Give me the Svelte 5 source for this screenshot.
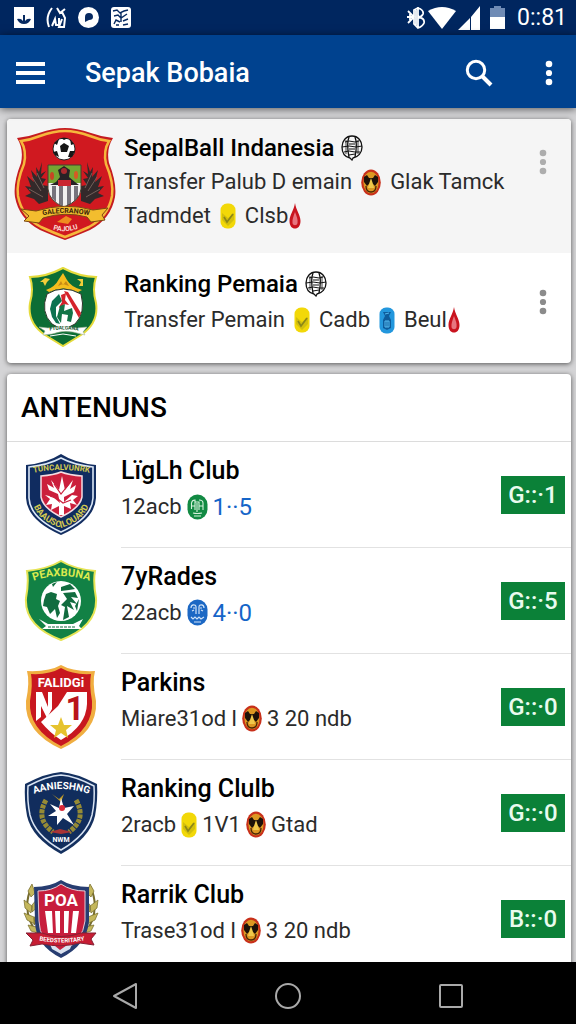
<script lang="ts">
    type Part = { text?: string; icon?: string; score?: boolean };

    const news = [
        {
            title: "SepalBall Indanesia",
            crest: "garuda",
            featured: true,
            lines: [
                [{ text: "Transfer Palub D emain" }, { icon: "face" }, { text: "Glak Tamck" }],
                [{ text: "Tadmdet" }, { icon: "yellow" }, { text: "Clsb" }, { icon: "drop" }]
            ] as Part[][]
        },
        {
            title: "Ranking Pemaia",
            crest: "green",
            featured: false,
            lines: [
                [
                    { text: "Transfer Pemain" },
                    { icon: "yellow" },
                    { text: "Cadb" },
                    { icon: "blue" },
                    { text: "Beul" },
                    { icon: "drop" }
                ]
            ] as Part[][]
        }
    ];

    const clubs = [
        {
            name: "LïgLh Club",
            crest: "navy",
            badge: "G::·1",
            line: [{ text: "12acb" }, { icon: "leaf" }, { text: "1··5", score: true }] as Part[]
        },
        {
            name: "7yRades",
            crest: "pea",
            badge: "G::·5",
            line: [{ text: "22acb" }, { icon: "mask" }, { text: "4··0", score: true }] as Part[]
        },
        {
            name: "Parkins",
            crest: "red",
            badge: "G::·0",
            line: [{ text: "Miare31od l" }, { icon: "face" }, { text: "3 20 ndb" }] as Part[]
        },
        {
            name: "Ranking Clulb",
            crest: "star",
            badge: "G::·0",
            line: [{ text: "2racb" }, { icon: "yellow" }, { text: "1V1" }, { icon: "face" }, { text: "Gtad" }] as Part[]
        },
        {
            name: "Rarrik Club",
            crest: "poa",
            badge: "B::·0",
            line: [{ text: "Trase31od l" }, { icon: "face" }, { text: "3 20 ndb" }] as Part[]
        }
    ];
</script>

{#snippet dots()}
    <svg width="10" height="26" viewBox="0 0 10 26" fill="currentColor" aria-hidden="true">
        <circle cx="5" cy="4" r="3.3" />
        <circle cx="5" cy="13" r="3.1" />
        <circle cx="5" cy="22" r="3.3" />
    </svg>
{/snippet}

{#snippet globe()}
    <svg width="22" height="26" viewBox="0 0 22 26" fill="none" stroke="#111" stroke-width="1.3" aria-hidden="true">
        <path d="M11 1C17 1 21 6 21 12C21 18 17 22 12 23L11 25L9 23C4 22 1 18 1 12C1 6 5 1 11 1Z" />
        <path d="M8 2C6 7 7 17 8 22M14 2C16 7 15 17 14 22" />
        <path d="M4 7L8 6L14 7L18 6M1 12L8 11L15 12L21 11M3 17L8 16L14 17L19 17M8 9H14M8 14H14M8 20L14 19" stroke-width="1" />
        <path d="M5 5V19M17 5V19" stroke-width="0.8" />
    </svg>
{/snippet}

{#snippet icon(kind: string)}
    {#if kind === "face"}
        <svg width="20" height="27" viewBox="0 0 20 27" aria-hidden="true">
            <ellipse cx="10" cy="13.5" rx="9.8" ry="13" fill="#c8301a" />
            <ellipse cx="10" cy="13.5" rx="7.6" ry="10.8" fill="#dc9822" />
            <path d="M3 8L6 6L8 9H12L14 6L17 8L17 13L14 17L12 15H8L6 17L3 13Z" fill="#1d1208" />
            <path d="M10 9L12 15L13 19H7L8 15Z" fill="#f0c94a" />
            <path d="M5 17Q5 23 10 23Q15 23 15 17" fill="none" stroke="#4a2308" stroke-width="1.3" />
        </svg>
    {:else if kind === "yellow"}
        <svg width="16" height="26" viewBox="0 0 16 26" aria-hidden="true">
            <rect x="0.5" y="0.5" width="15" height="25" rx="6.5" fill="#f2d808" />
            <path d="M2 10L8 15L14 10V17L8 23L2 17Z" fill="#d3bf0c" />
            <path d="M4 14L7 19L13 11" fill="none" stroke="#8c8718" stroke-width="1.7" />
        </svg>
    {:else if kind === "blue"}
        <svg width="16" height="27" viewBox="0 0 16 27" aria-hidden="true">
            <rect x="0.5" y="0.5" width="15" height="26" rx="6.5" fill="#2397dd" />
            <path d="M4 5H12L10 9L12 13V21L8 23L4 21V13L6 9Z" fill="#0e5c9c" />
            <path d="M6 7L10 6M6 14H10V20H6ZM8 14V20" fill="none" stroke="#55b9ee" />
        </svg>
    {:else if kind === "drop"}
        <svg class="drop" width="12" height="26" viewBox="0 0 12 26" aria-hidden="true">
            <path d="M6 0C7 7 11.5 12 11.5 18C11.5 23 9 25.5 6 25.5C3 25.5 0.5 23 0.5 18C0.5 12 5 7 6 0Z" fill="#c9141f" />
            <path d="M6 9C8 14 9 17 8.5 20C8 23 4 23 3.5 20C3 17 4.5 13 6 9Z" fill="#e77680" />
        </svg>
    {:else if kind === "leaf"}
        <svg width="21" height="26" viewBox="0 0 21 26" aria-hidden="true">
            <rect x="0.5" y="0.5" width="20" height="25" rx="10" fill="#128a43" />
            <path d="M4.500 15V9Q5 6 8 6V16M8 8H12V16M12 6Q16 6 16 9V16M10 9V18M5 12H8M12 12H16M6 19Q10 20 15 19M7 22H14" fill="none" stroke="#d6f2dc" stroke-width="1.1" />
        </svg>
    {:else}
        <svg width="21" height="27" viewBox="0 0 21 27" aria-hidden="true">
            <rect x="0.5" y="0.5" width="20" height="26" rx="10" fill="#1c68c4" />
            <path d="M4 9C4 5 9 5 9 8V15M17 9C17 5 12 5 12 8V15M6 9H8M13 9H15M5 12L7 11M14 11L16 12M4 18L6 20L8 18L10 20L12 18L14 20L17 18M7 23H14" fill="none" stroke="#cfe2f7" stroke-width="1.2" />
        </svg>
    {/if}
{/snippet}

{#snippet line(parts: Part[])}
    <p class="line">
        {#each parts as part}
            {#if part.icon}
                {@render icon(part.icon)}
            {:else}
                <span class:score={part.score}>{part.text}</span>
            {/if}
        {/each}
    </p>
{/snippet}

{#snippet crest(kind: string)}
    {#if kind === "garuda"}
        <svg class="crest" width="102" height="114" viewBox="0 0 102 114" aria-hidden="true">
            <path d="M3 11Q14 10 25 6Q40 1 51 1Q62 1 77 6Q88 10 99 11Q92 22 95 36Q103 56 101 70Q97 92 76 103Q62 109 51 113Q40 109 26 103Q5 92 1 70Q-1 56 7 36Q10 22 3 11Z" fill="#c51b20" />
            <path d="M7 14Q16 13 26 9Q40 4 51 4Q62 4 76 9Q86 13 95 14Q89 24 92 37Q100 56 98 69Q94 90 75 100Q62 106 51 110Q40 106 27 100Q8 90 4 69Q2 56 10 37Q13 24 7 14Z" fill="#d01920" stroke="#f6b73c" stroke-width="2.5" />
            <circle cx="50" cy="22" r="11" fill="#fff" stroke="#222" />
            <path d="M46 19L50 16L55 19L53 25H47ZM40 16L45 12L43 18ZM56 12L60 17L57 18ZM39 25L43 24L45 30L41 28ZM56 24L61 24L58 30L54 30ZM47 11L50 13L54 11Z" fill="#161616" />
            <path d="M28 35L25 45L22 40L23 50L17 43L20 55L13 49L17 60L11 59L17 66L11 69L20 72L25 77L34 74V59L28 58L32 52L27 51L32 44L27 47Z" fill="#33292a" />
            <path d="M73 35L76 45L79 40L78 50L84 43L81 55L88 49L84 60L90 59L84 66L90 69L81 72L76 77L67 74V59L73 58L69 52L74 51L69 44L74 47Z" fill="#33292a" />
            <path d="M18 50L27 64M23 46L30 61M15 62L29 70M83 50L74 64M78 46L71 61M86 62L72 70" fill="none" stroke="#74605a" />
            <path d="M34 38H67V62Q66 74 50 80Q35 74 34 62Z" fill="#f1f1f1" />
            <path d="M34 38H67V56H34Z" fill="#74a632" />
            <path d="M38 59H42V75L38 71ZM45 59H49V79L45 77ZM53 59H57V77L53 79ZM60 59H64V70L60 75Z" fill="#77747d" />
            <path d="M36 58L42 55L46 50L44 43L50 39L56 43L55 50L61 55L65 58Z" fill="#272126" />
            <circle cx="50" cy="44" r="3" fill="#a92a2e" />
            <path d="M44 53H57V59H44Z" fill="#c92631" />
            <ellipse cx="38" cy="49" rx="2" ry="4" fill="#c84524" />
            <ellipse cx="62" cy="48" rx="2" ry="4" fill="#d75a24" />
            <path d="M34 38H67V62Q66 74 50 80Q35 74 34 62Z" fill="none" stroke="#44402e" />
            <path d="M7 82L22 84Q51 75 79 83L94 81L88 88L91 93L77 95L73 90Q51 84 29 91L25 96L10 94L15 89Z" fill="#f3bd2e" stroke="#7d4813" />
            <path id="garuda-band" d="M22 90Q51 82 82 90" fill="none" />
            <text class="lettering" font-size="7" fill="#3b240c"><textPath href="#garuda-band" startOffset="50%" text-anchor="middle">GALECRANOW</textPath></text>
            <path d="M43 95L52 89L58 92L54 97Z" fill="#ef8c20" />
            <path id="garuda-foot" d="M31 99Q51 110 72 98" fill="none" />
            <text class="lettering" font-size="7" fill="#f9ddd5"><textPath href="#garuda-foot" startOffset="50%" text-anchor="middle">PAJOLU</textPath></text>
        </svg>
    {:else if kind === "green"}
        <svg class="crest" width="70" height="80" viewBox="0 0 70 80" aria-hidden="true">
            <path d="M2 10Q18 10 35 1Q52 10 68 10Q64 22 68 36Q71 56 53 68L35 79L17 68Q-1 56 2 36Q6 22 2 10Z" fill="#0c6d35" stroke="#e5db3c" stroke-width="2" />
            <path d="M18 23Q27 20 31 12L35 6L39 13Q43 20 54 23L50 25Q35 18 21 25Z" fill="#f4bd1e" />
            <path d="M30 19L33 14L35 18L38 14L41 19L35 17Z" fill="#c88a14" />
            <path d="M12 15L17 11L22 12L19 15L17 19L15 15ZM49 12H55V19H51L53 15Z" fill="#f2ce38" />
            <path d="M19 27Q35 17 53 27Q58 46 47 57L35 63L24 57Q12 45 19 27Z" fill="#fff" stroke="#2d3529" />
            <path d="M36 24L40 25L53 46L51 51Z" fill="#d4232b" />
            <path d="M31 27L24 34L22 42L24 50L28 56L32 57L28 49L28 40L34 34Z" fill="#0c7250" />
            <path d="M33 28L38 26L37 33L41 38L36 37L33 43L31 40L34 35Z" fill="#d4232b" />
            <path d="M32 39L37 37L36 44L44 41L45 46L43 55L39 54L40 48L34 47L33 56L29 50Z" fill="#127447" />
            <path d="M11 60L20 61Q36 58 49 61L59 60L55 65L57 68L45 65Q34 63 24 67L15 68L17 64Z" fill="#fff" stroke="#a6b99b" stroke-width="0.6" />
            <path id="green-band" d="M16 65Q35 60 56 65" fill="none" />
            <text class="lettering" font-size="5" fill="#15572f"><textPath href="#green-band" startOffset="50%" text-anchor="middle">FTUALGANA</textPath></text>
            <path d="M22 69L35 67L48 69" fill="none" stroke="#fff" />
        </svg>
    {:else if kind === "navy"}
        <svg class="crest" width="72" height="84" viewBox="0 0 72 84" aria-hidden="true">
            <path d="M1 12Q22 10 36 1Q50 10 71 12V45Q70 67 36 82Q2 67 1 45Z" fill="#132e61" />
            <path d="M4 14Q23 12 36 5Q49 12 68 14V45Q67 65 36 79Q5 65 4 45Z" fill="#102c60" stroke="#dce9f8" stroke-width="1.6" />
            <path d="M16 23Q29 22 36 19Q44 22 57 23V44Q55 55 36 64Q18 55 16 44Z" fill="#cb1f3c" stroke="#f5dce2" stroke-width="1.5" />
            <path d="M34 62V53L26 57L27 51L21 52L25 46L20 42L28 44L35 50L33 41L24 37L22 31L29 35L26 27L34 37L37 23L40 37L48 27L45 36L51 32L49 39L39 44V49L47 42L53 43L48 47L52 52L45 50L46 56L39 53V62Z" fill="#fff" />
            <path d="M29 31L36 41L44 31M25 43L33 46L38 50L46 47" fill="none" stroke="#cb1f3c" stroke-width="1.2" />
            <path id="navy-top" d="M7 20Q36 14 66 20" fill="none" />
            <text class="lettering" font-size="8" fill="#d4c951"><textPath href="#navy-top" startOffset="50%" text-anchor="middle">TUNCALVUNRK</textPath></text>
            <path id="navy-bottom" d="M6 38Q6 66 36 75Q66 66 67 38" fill="none" />
            <text class="lettering" font-size="9" fill="#d4c951"><textPath href="#navy-bottom" startOffset="50%" text-anchor="middle">BAAUSCILOUARD</textPath></text>
        </svg>
    {:else if kind === "pea"}
        <svg class="crest" width="72" height="82" viewBox="0 0 72 82" aria-hidden="true">
            <path d="M2 11Q23 9 36 1Q49 9 70 11Q68 22 71 38Q73 66 36 80Q-1 66 1 38Q4 22 2 11Z" fill="#128145" stroke="#e6e454" stroke-width="2" />
            <circle cx="36" cy="41" r="20" fill="#fff" />
            <path d="M19 40L21 34L26 32L32 34L31 39L35 41L33 46L35 53L32 58L30 49L25 54L22 47L18 46ZM36 27L45 24L50 29L44 30L36 31ZM38 33L50 32L53 38L46 37L52 44L45 42L49 50L42 46L44 57L38 60L40 47L36 45L42 39Z" fill="#116c3f" />
            <path d="M27 24L32 22L28 27ZM23 30L28 27M50 46L54 39L52 51" fill="#116c3f" />
            <path d="M14 59L23 64H48L58 59L54 66L57 69H17L21 66Z" fill="#fff" />
            <path d="M23 67H51" stroke="#116c3f" stroke-dasharray="3 1" />
            <path id="pea-top" d="M8 21Q36 11 65 21" fill="none" />
            <text class="lettering" font-size="11" fill="#dcea4e"><textPath href="#pea-top" startOffset="50%" text-anchor="middle">PEAXBUNA</textPath></text>
        </svg>
    {:else if kind === "red"}
        <svg class="crest" width="72" height="86" viewBox="0 0 72 86" aria-hidden="true">
            <path d="M2 7Q24 8 36 1Q48 8 70 7Q67 18 71 37Q73 68 36 85Q-1 68 1 37Q5 18 2 7Z" fill="#f0ae40" />
            <path d="M6 10Q24 11 36 4Q48 11 66 10Q64 20 67 37Q69 65 36 82Q3 65 5 37Q8 20 6 10Z" fill="#c8171f" />
            <path d="M11 28H17L23 43V28H27V45L22 54L16 42V53L11 57Z" fill="#fff" />
            <path d="M42 28H62V40Q61 62 36 76Q25 69 16 58L33 42Z" fill="#fff" />
            <text class="lettering" x="36" y="23" text-anchor="middle" font-size="13" fill="#fff">FALIDGi</text>
            <text class="lettering" x="50" y="56" text-anchor="middle" font-size="33" fill="#b9141c">1</text>
            <path d="M36 53L39 61L47 61L41 66L43 74L36 69L29 74L31 66L25 61L33 61Z" fill="#e6c32e" />
        </svg>
    {:else if kind === "star"}
        <svg class="crest" width="74" height="84" viewBox="0 0 74 84" aria-hidden="true">
            <path d="M1 13Q22 2 37 1Q52 2 73 13Q74 29 71 45Q66 67 37 83Q8 67 3 45Q0 29 1 13Z" fill="#14305f" />
            <path d="M4 15Q23 5 37 4Q51 5 70 15Q71 30 68 44Q63 64 37 79Q11 64 6 44Q3 30 4 15Z" fill="#112d5d" stroke="#d9e4f3" stroke-width="1.5" />
            <path id="star-top" d="M7 24Q37 12 68 24" fill="none" />
            <text class="lettering" font-size="10" fill="#fff"><textPath href="#star-top" startOffset="50%" text-anchor="middle">AANIESHNG</textPath></text>
            <path d="M22 29Q11 48 29 61M52 29Q63 48 45 61" fill="none" stroke="#968b35" stroke-width="5" stroke-dasharray="4 1" />
            <path d="M28 23L35 28L40 23L37 31Z" fill="#c09926" />
            <path d="M37 27L40 37L50 35L43 43L50 54L39 47L33 54L33 45L24 45L32 40L26 33L35 37Z" fill="#fff" />
            <circle cx="38" cy="37" r="3" fill="#d92a38" />
            <path d="M26 61L36 58L48 61L37 63Z" fill="#a93435" />
            <text class="lettering" x="37" y="71" text-anchor="middle" font-size="7" fill="#fff">NWM</text>
        </svg>
    {:else}
        <svg class="crest" width="78" height="80" viewBox="0 0 78 80" aria-hidden="true">
            <path d="M10 7Q-2 32 16 56M68 7Q80 32 62 56" fill="none" stroke="#766c2e" stroke-width="2" />
            <path d="M10 5L13 14L9 18L6 12ZM2 21L10 27L9 34L3 29ZM16 19L17 27L10 33L10 26ZM2 34L12 38L13 45L5 41ZM17 32L19 40L12 46L12 39ZM6 46L15 48L19 55L9 52ZM68 5L65 14L69 18L72 12ZM76 21L68 27L69 34L75 29ZM62 19L61 27L68 33L68 26ZM76 34L66 38L65 45L73 41ZM61 32L59 40L66 46L66 39ZM72 46L63 48L59 55L69 52Z" fill="#c4b75c" stroke="#736829" stroke-width="0.7" />
            <path d="M12 8Q28 8 39 1Q50 8 67 8V42Q65 66 39 79Q13 66 13 42Z" fill="#273d71" />
            <path d="M16 12Q30 12 39 5Q49 12 63 12V42Q61 62 39 74Q17 62 17 42Z" fill="#c71d3c" stroke="#e4ccd6" />
            <text class="lettering" x="39" y="27" text-anchor="middle" font-size="17" fill="#fff">POA</text>
            <path d="M23 32H30L31 54H26ZM33 32H38V54H34ZM42 32H47L46 54H42ZM51 32H57L54 54H49Z" fill="#fff" />
            <path d="M27 62L38 71L51 62L48 70L39 75L30 70Z" fill="#dae2ef" />
            <path d="M4 54L20 54Q39 61 59 54L74 54L69 60L72 66L58 64Q39 69 20 65L8 67L11 61Z" fill="#c71d33" stroke="#842034" />
            <path id="poa-band" d="M11 60Q39 67 69 60" fill="none" />
            <text class="lettering" font-size="6" fill="#fff"><textPath href="#poa-band" startOffset="50%" text-anchor="middle">BEEDSTERITARY</textPath></text>
        </svg>
    {/if}
{/snippet}

<div class="app">
    <div class="status">
        <div class="notifications">
            <svg width="20" height="21" viewBox="0 0 20 21" aria-hidden="true">
                <path d="M0 0H20V21H0Z" fill="#fff" />
                <path d="M3 12Q7 11 9 14V8H11V14Q13 11 17 12Q15 17 10 17Q5 17 3 12Z" fill="#072a61" />
            </svg>
            <svg width="20" height="21" viewBox="0 0 20 21" fill="none" stroke="#fff" stroke-width="2" aria-hidden="true">
                <path d="M6 1Q-1 10 3 20M6 19L9 12L10 18H13V11M11 1L14 6L19 2M16 5L19 11L18 20H13L16 12" />
            </svg>
            <svg width="21" height="21" viewBox="0 0 21 21" aria-hidden="true">
                <circle cx="10.5" cy="10.5" r="10.5" fill="#fff" />
                <path d="M7 15V10Q7 6 11 6Q15 6 15 10Q15 13 11 13Z" fill="#072a61" />
            </svg>
            <svg width="20" height="21" viewBox="0 0 20 21" aria-hidden="true">
                <rect width="20" height="21" rx="3" fill="#fff" />
                <path d="M2 4L6 3L9 6L13 4L17 3M3 9L7 8L10 11L16 7M10 6V15M3 17L5 13L9 15M12 14L17 12M12 18L17 17M5 18L8 18" fill="none" stroke="#072a61" stroke-width="1.4" />
            </svg>
        </div>
        <div class="system">
            <svg width="20" height="23" viewBox="0 0 20 23" fill="none" stroke="#fff" stroke-width="1.8" aria-hidden="true">
                <path d="M12 1V22M12 2Q18 4 17 8Q16 11 12 11Q19 12 18 17Q17 20 12 22L8 18V4ZM2 5L8 11L2 17M1 11H8M4 8V14M10 4V19" />
            </svg>
            <svg width="28" height="22" viewBox="0 0 28 22" aria-hidden="true">
                <path d="M0 4Q14 -4 28 4L14 22Z" fill="#fff" />
            </svg>
            <svg width="22" height="24" viewBox="0 0 22 24" aria-hidden="true">
                <path d="M0 24L12 12V24ZM13 11L22 0V24H13Z" fill="#fff" />
            </svg>
            <svg class="battery" width="15" height="23" viewBox="0 0 15 23" aria-hidden="true">
                <path d="M0 2H4V0H11V2H15V12H0Z" fill="#6f8bb5" />
                <path d="M0 11H15V23H0Z" fill="#fff" />
            </svg>
            <span>0::81</span>
        </div>
    </div>

    <header>
        <button class="menu" aria-label="Menu">
            <svg width="30" height="22" viewBox="0 0 30 22" stroke="#fff" stroke-width="4" aria-hidden="true">
                <path d="M0 2H29M0 11H29M0 20H29" />
            </svg>
        </button>
        <h1>Sepak Bobaia</h1>
        <button class="search" aria-label="Search">
            <svg width="28" height="28" viewBox="0 0 28 28" fill="none" stroke="#fff" aria-hidden="true">
                <circle cx="11" cy="11" r="8.7" stroke-width="3" />
                <path d="M17 17L26 26" stroke-width="4" />
            </svg>
        </button>
        <button class="more" aria-label="More options">{@render dots()}</button>
    </header>

    <main>
        <section class="card">
            {#each news as item}
                <article class="item" class:featured={item.featured}>
                    {@render crest(item.crest)}
                    <div class="body">
                        <h2>{item.title} {@render globe()}</h2>
                        {#each item.lines as parts}
                            {@render line(parts)}
                        {/each}
                    </div>
                    <button class="options" aria-label="Options for {item.title}">{@render dots()}</button>
                </article>
            {/each}
        </section>

        <section class="card">
            <h2 class="heading">ANTENUNS</h2>
            {#each clubs as club}
                <article class="club">
                    {@render crest(club.crest)}
                    <div class="row">
                        <div class="body">
                            <h3>{club.name}</h3>
                            {@render line(club.line)}
                        </div>
                        <span class="badge">{club.badge}</span>
                    </div>
                </article>
            {/each}
        </section>
    </main>

    <nav>
        <button aria-label="Back">
            <svg width="28" height="28" viewBox="0 0 28 28" aria-hidden="true">
                <path d="M3 14L25 2V26Z" />
            </svg>
        </button>
        <button aria-label="Home">
            <svg width="28" height="28" viewBox="0 0 28 28" aria-hidden="true">
                <circle cx="14" cy="14" r="12" />
            </svg>
        </button>
        <button aria-label="Recent">
            <svg width="28" height="28" viewBox="0 0 28 28" aria-hidden="true">
                <rect x="3" y="3" width="22" height="22" rx="1" />
            </svg>
        </button>
    </nav>
</div>

<style>
    :global(body) {
        font-family: Roboto, "Liberation Sans", sans-serif;
        color: #000;
    }

    .app {
        height: 100vh;
        display: flex;
        flex-direction: column;
        background-color: #d4d4d6;
    }

    h1,
    h2,
    h3,
    p {
        margin: 0;
    }

    svg {
        display: block;
        flex: none;
    }

    button {
        border: none;
        padding: 0;
        background: none;
        color: inherit;
        display: flex;
        align-items: center;
        justify-content: center;
        cursor: pointer;
    }

    .status {
        flex: none;
        height: 35px;
        padding: 0 9px 0 14px;
        display: flex;
        align-items: center;
        justify-content: space-between;
        background-color: #00265f;
        color: #fff;
    }

    .notifications {
        display: flex;
        gap: 12px;
    }

    .system {
        display: flex;
        align-items: center;
        gap: 2px;
        font-size: 23px;
        line-height: 34px;
    }

    .battery {
        margin: 0 10px 0 8px;
    }

    header {
        flex: none;
        position: relative;
        box-sizing: border-box;
        height: 73px;
        padding: 2px 7px 0 11px;
        display: flex;
        align-items: center;
        background-color: #00428f;
        color: #fff;
        box-shadow: 0 1px 8px rgba(0, 0, 0, 0.6);
    }

    header button {
        width: 40px;
        height: 48px;
    }

    header .search {
        margin: 0 30px 0 auto;
    }

    h1 {
        margin-left: 34px;
        font-size: 27px;
        font-weight: 500;
    }

    main {
        flex: 1;
        min-height: 0;
        padding: 11px 5px 0 7px;
        overflow-y: auto;
        scrollbar-width: none;
    }

    .card {
        margin-bottom: 11px;
        border-radius: 4px;
        background-color: #fff;
        box-shadow: 0 1px 5px rgba(0, 0, 0, 0.6);
    }

    .item {
        box-sizing: border-box;
        min-height: 110px;
        padding: 14px 0 14px 21px;
        display: flex;
        align-items: flex-start;
    }

    .item .body {
        margin-left: 26px;
    }

    .item.featured {
        min-height: 134px;
        padding: 8px 0 8px 7px;
        border-radius: 4px 4px 0 0;
        background-color: #f5f5f5;
    }

    .featured .body {
        margin: 4px 0 0 8px;
    }

    .body {
        flex: 1;
    }

    h2,
    h3 {
        font-size: 24px;
        line-height: 34px;
        font-weight: 500;
    }

    h3 {
        font-size: 25px;
    }

    .item h2 {
        display: flex;
        align-items: center;
        gap: 7px;
    }

    .line {
        margin-top: 2px;
        display: flex;
        align-items: center;
        gap: 9px;
        font-size: 22px;
        line-height: 34px;
        color: #2b2b2b;
        white-space: nowrap;
    }

    .featured .line {
        margin-top: 0;
    }

    .club .line {
        gap: 5px;
    }

    .line :global(.drop) {
        margin-left: -8px;
    }

    .score {
        color: #1565c8;
        font-size: 24px;
    }

    .options {
        width: 56px;
        height: 28px;
        margin-top: 21px;
        color: #8b8b8b;
    }

    .featured .options {
        color: #adadad;
    }

    .heading {
        padding: 0 14px;
        border-bottom: 1px solid #dcdcdc;
        font-size: 28px;
        line-height: 67px;
    }

    .club {
        height: 106px;
        padding-left: 18px;
        display: flex;
        align-items: center;
    }

    .club .crest {
        width: 78px;
        margin: 0 21px 0 -3px;
    }

    .row {
        box-sizing: border-box;
        flex: 1;
        height: 100%;
        padding-right: 6px;
        display: flex;
        align-items: center;
        border-bottom: 1px solid #e2e2e2;
    }

    .row .body {
        padding-bottom: 12px;
    }

    .badge {
        width: 64px;
        background-color: #0b8138;
        color: #e9fbee;
        font-size: 24px;
        font-weight: 500;
        line-height: 38px;
        text-align: center;
    }

    .lettering {
        font-weight: 700;
    }

    nav {
        flex: none;
        position: relative;
        height: 62px;
        padding: 6px 44px 0;
        box-sizing: border-box;
        display: flex;
        align-items: center;
        background-color: #000;
    }

    nav button {
        flex: 1;
        height: 48px;
    }

    nav svg {
        fill: none;
        stroke: #a9a9a9;
        stroke-width: 2;
        stroke-linejoin: round;
    }
</style>
